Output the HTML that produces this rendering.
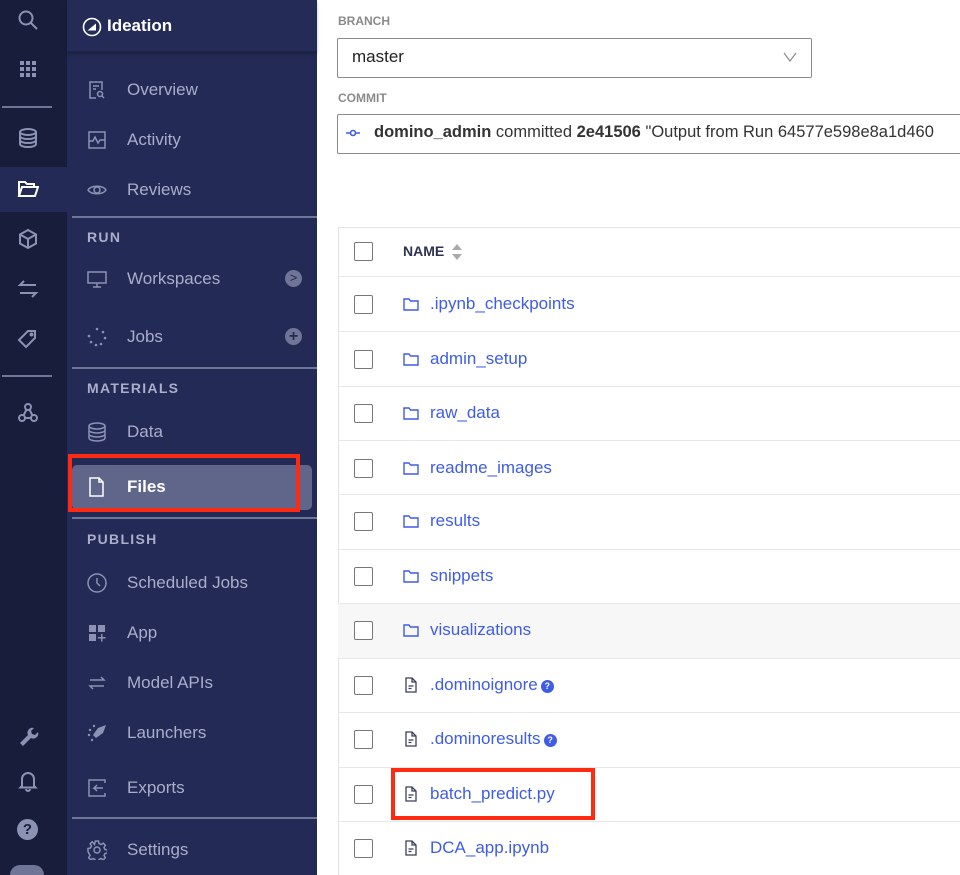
<!DOCTYPE html>
<html style="width:960px;height:875px;overflow:hidden"><head><meta charset="utf-8"><style>
*{margin:0;padding:0;box-sizing:border-box}
body{width:960px;height:875px;overflow:hidden;background:#fff;font-family:"Liberation Sans",Arial,sans-serif;position:relative}
.rail{position:absolute;left:0;top:0;width:67px;height:875px;background:#181d3b}
.side{position:absolute;left:67px;top:0;width:250px;height:875px;background:#232a55}
.hdr{position:absolute;left:67px;top:0;width:250px;height:52px;background:#242b57;border-bottom:1px solid #1d2349;box-shadow:0 2px 3px rgba(0,0,0,.25)}
.a{position:absolute}
.ri{position:absolute;left:17px;width:22px;height:22px}
.item{position:absolute;left:127px;font-size:17px;color:#a9aecb}
.ic{position:absolute;left:87px;width:20px;height:20px}
.sec{position:absolute;left:87px;font-size:14px;font-weight:bold;letter-spacing:1.3px;color:#a9aecb}
.div{position:absolute;left:72px;width:245px;height:2px;background:#6f7597}
.lbl{position:absolute;left:338px;font-size:12px;font-weight:bold;color:#8a8a8a}
.row{position:absolute;left:338px;width:622px;border-top:1px solid #e8e8e8}
.cb{position:absolute;left:16px;width:19px;height:19px;border:1px solid #777;border-radius:2px;background:#fff}
.nm{position:absolute;left:92px;font-size:17px;color:#3e5ce6}
.fi{position:absolute;left:65px;width:16px;height:16px}
.q{display:inline-block;width:13px;height:13px;border-radius:50%;background:#3e5ce6;color:#fff;font-size:9px;font-weight:bold;text-align:center;line-height:13px;vertical-align:1px;margin-left:3px}
</style></head><body>
<div class="rail"></div>
<div class="a" style="left:0;top:167px;width:67px;height:45px;background:#232a56"></div>
<div class="a" style="left:2px;top:106px;width:50px;height:2px;background:#6f7597"></div>
<div class="a" style="left:2px;top:375px;width:50px;height:2px;background:#6f7597"></div>
<svg class="ri" style="top:9px" viewBox="0 0 22 22" fill="none" stroke="#8c92b3" stroke-width="2"><circle cx="9" cy="9" r="6.5"/><path d="M14 14l6 6"/></svg>
<svg class="ri" style="top:58px" viewBox="0 0 22 22" fill="#8c92b3"><rect x="3" y="3" width="4" height="4"/><rect x="9" y="3" width="4" height="4"/><rect x="15" y="3" width="4" height="4"/><rect x="3" y="9" width="4" height="4"/><rect x="9" y="9" width="4" height="4"/><rect x="15" y="9" width="4" height="4"/><rect x="3" y="15" width="4" height="4"/><rect x="9" y="15" width="4" height="4"/><rect x="15" y="15" width="4" height="4"/></svg>
<svg class="ri" style="top:127px" viewBox="0 0 22 22" fill="none" stroke="#8c92b3" stroke-width="2"><ellipse cx="11" cy="5" rx="8" ry="3"/><path d="M3 5v12c0 1.7 3.6 3 8 3s8-1.3 8-3V5M3 9c0 1.7 3.6 3 8 3s8-1.3 8-3M3 13c0 1.7 3.6 3 8 3s8-1.3 8-3"/></svg>
<svg class="ri" style="top:178px" viewBox="0 0 22 22" fill="none" stroke="#fff" stroke-width="2"><path d="M2 18V4h6l2 2h7v3M2 18l3-9h16l-3 9z"/></svg>
<svg class="ri" style="top:228px" viewBox="0 0 22 22" fill="none" stroke="#8c92b3" stroke-width="2"><path d="M11 2l8 4.5v9L11 20l-8-4.5v-9zM3 6.5l8 4.5 8-4.5M11 11v9"/></svg>
<svg class="ri" style="top:278px" viewBox="0 0 22 22" fill="none" stroke="#8c92b3" stroke-width="2"><path d="M19 7H3l4-4M3 15h16l-4 4"/></svg>
<svg class="ri" style="top:328px" viewBox="0 0 22 22" fill="none" stroke="#8c92b3" stroke-width="2"><path d="M11 3h7v7l-9 9-7-7z"/><circle cx="14.5" cy="6.5" r="1"/></svg>
<svg class="ri" style="top:402px" viewBox="0 0 22 22" fill="none" stroke="#8c92b3" stroke-width="2"><circle cx="11" cy="5" r="3"/><circle cx="5" cy="16" r="3"/><circle cx="17" cy="16" r="3"/><path d="M9.5 7.5l-3 6M12.5 7.5l3 6M8 16h6"/></svg>
<svg class="ri" style="top:724px" viewBox="0 0 22 22" fill="#8c92b3"><path d="M3 19l8-8a5 5 0 0 1 6-7l-3 3 1 3 3 1 3-3a5 5 0 0 1-7 6l-8 8z"/></svg>
<svg class="ri" style="top:770px" viewBox="0 0 22 22" fill="none" stroke="#8c92b3" stroke-width="2"><path d="M5 16V9a6 6 0 0 1 12 0v7l1.5 1.5h-15zM9 19a2 2 0 0 0 4 0M11 2v1"/></svg>
<div class="a" style="left:17px;top:819px;width:21px;height:21px;border-radius:50%;background:#8c92b3;color:#181d3b;font-weight:bold;font-size:15px;text-align:center;line-height:21px">?</div>
<div class="a" style="left:10px;top:865px;width:34px;height:10px;border-radius:17px 17px 0 0;background:#6f7597"></div>

<div class="side"></div>
<div class="hdr"></div>
<svg class="a" style="left:82px;top:17px;width:20px;height:20px" viewBox="0 0 20 20"><circle cx="10" cy="10" r="8.5" fill="none" stroke="#fff" stroke-width="1.6"/><path d="M5.5 13.5h8.5V6.5z" fill="#fff"/></svg>
<div class="a" style="left:107px;top:16px;font-size:17px;font-weight:bold;color:#fff">Ideation</div>

<svg class="ic" style="top:80px" viewBox="0 0 20 20" fill="none" stroke="#8c92b3" stroke-width="1.5"><path d="M9 18H3V2h12v8M6 6h6M6 9h3"/><circle cx="13" cy="14" r="2.5"/><path d="M15 16l2 2"/></svg>
<div class="item" style="top:80px">Overview</div>
<svg class="ic" style="top:130px" viewBox="0 0 20 20" fill="none" stroke="#8c92b3" stroke-width="1.5"><rect x="2" y="2" width="16" height="16"/><path d="M2 11h4l2-4 3 6 2-3h5"/></svg>
<div class="item" style="top:130px">Activity</div>
<svg class="ic" style="top:180px" viewBox="0 0 20 20" fill="none" stroke="#8c92b3" stroke-width="1.5"><path d="M1 10c3-5 15-5 18 0-3 5-15 5-18 0z"/><circle cx="10" cy="10" r="3"/></svg>
<div class="item" style="top:180px">Reviews</div>
<div class="div" style="top:216px"></div>
<div class="sec" style="top:229px">RUN</div>
<svg class="ic" style="top:269px" viewBox="0 0 20 20" fill="none" stroke="#8c92b3" stroke-width="1.5"><rect x="1" y="3" width="18" height="11"/><path d="M10 14v4M6 18h8"/></svg>
<div class="item" style="top:269px">Workspaces</div>
<div class="a" style="left:285px;top:270px;width:17px;height:17px;border-radius:50%;background:#6f7597;color:#232a55;font-size:13px;text-align:center;line-height:16px">&gt;</div>
<svg class="ic" style="top:327px" viewBox="0 0 20 20" fill="#8c92b3"><circle cx="10" cy="2" r="1.3"/><circle cx="16" cy="5" r="1.3"/><circle cx="18" cy="11" r="1.3"/><circle cx="14" cy="17" r="1.3"/><circle cx="9" cy="18" r="1.3"/><circle cx="4" cy="15" r="1.3"/><circle cx="2" cy="9" r="1.3"/></svg>
<div class="item" style="top:327px">Jobs</div>
<div class="a" style="left:285px;top:328px;width:17px;height:17px;border-radius:50%;background:#6f7597;color:#232a55;font-size:16px;font-weight:bold;text-align:center;line-height:17px">+</div>
<div class="div" style="top:367px"></div>
<div class="sec" style="top:380px">MATERIALS</div>
<svg class="ic" style="top:422px" viewBox="0 0 20 20" fill="none" stroke="#8c92b3" stroke-width="1.5"><ellipse cx="10" cy="4" rx="8" ry="3"/><path d="M2 4v12c0 1.7 3.6 3 8 3s8-1.3 8-3V4M2 8c0 1.7 3.6 3 8 3s8-1.3 8-3M2 12c0 1.7 3.6 3 8 3s8-1.3 8-3"/></svg>
<div class="item" style="top:422px">Data</div>
<div class="a" style="left:72px;top:465px;width:240px;height:45px;border-radius:5px;background:#5f6689"></div>
<svg class="ic" style="top:477px" viewBox="0 0 20 20" fill="none" stroke="#fff" stroke-width="1.5"><path d="M3 1h9l4 4v14H3zM12 1v4h4"/></svg>
<div class="item" style="top:477px;color:#fff;font-weight:bold">Files</div>
<div class="a" style="left:68px;top:454px;width:232px;height:58px;border:4px solid #ff2a12"></div>
<div class="div" style="top:517px"></div>
<div class="sec" style="top:531px">PUBLISH</div>
<svg class="ic" style="top:573px" viewBox="0 0 20 20" fill="none" stroke="#8c92b3" stroke-width="1.5"><circle cx="10" cy="10" r="9"/><path d="M10 5v5l3 3"/></svg>
<div class="item" style="top:573px">Scheduled Jobs</div>
<svg class="ic" style="top:623px" viewBox="0 0 20 20" fill="#8c92b3"><rect x="2" y="2" width="7" height="7"/><rect x="11" y="2" width="7" height="7"/><rect x="2" y="11" width="7" height="7"/><path d="M14 11h1.5v3h3v1.5h-3v3H14v-3h-3V14h3z"/></svg>
<div class="item" style="top:623px">App</div>
<svg class="ic" style="top:673px" viewBox="0 0 20 20" fill="none" stroke="#8c92b3" stroke-width="1.5"><path d="M3 7h14l-3-3M17 13H3l3 3"/></svg>
<div class="item" style="top:673px">Model APIs</div>
<svg class="ic" style="top:723px" viewBox="0 0 20 20" fill="#8c92b3"><path d="M19 2l-8 3-5 7 3 3 7-5z"/><circle cx="3" cy="7" r="1.2"/><circle cx="7" cy="3" r="1.2"/><circle cx="2" cy="12" r="1.2"/><circle cx="5" cy="17" r="1.2"/></svg>
<div class="item" style="top:723px">Launchers</div>
<svg class="ic" style="top:778px" viewBox="0 0 20 20" fill="none" stroke="#8c92b3" stroke-width="1.5"><path d="M18 5V2H2v16h16v-3M16 10H7l3-3M7 10l3 3"/></svg>
<div class="item" style="top:778px">Exports</div>
<div class="div" style="top:817px"></div>
<svg class="ic" style="top:840px" viewBox="0 0 20 20" fill="none" stroke="#8c92b3" stroke-width="1.5"><circle cx="10" cy="10" r="3"/><path d="M8.5 1h3l.5 2.5 2 1 2.3-1.3 2 2-1.3 2.3 1 2 2.5.5v3l-2.5.5-1 2 1.3 2.3-2 2-2.3-1.3-2 1-.5 2.5h-3l-.5-2.5-2-1-2.3 1.3-2-2 1.3-2.3-1-2L1 11.5v-3l2.5-.5 1-2-1.3-2.3 2-2L7.5 4.5l.5-2z"/></svg>
<div class="item" style="top:840px">Settings</div>

<div class="lbl" style="top:14px">BRANCH</div>
<div class="a" style="left:337px;top:38px;width:475px;height:40px;border:1px solid #8a8a8a;border-radius:2px"></div>
<div class="a" style="left:352px;top:47px;font-size:17px;color:#222">master</div>
<svg class="a" style="left:783px;top:51px;width:14px;height:12px" viewBox="0 0 14 12" fill="none" stroke="#888" stroke-width="1.2"><path d="M1 2l6 8 6-8"/></svg>
<div class="lbl" style="top:91px">COMMIT</div>
<div class="a" style="left:337px;top:114px;width:640px;height:40px;border:1px solid #8a8a8a;border-radius:2px"></div>
<svg class="a" style="left:346px;top:128px;width:14px;height:10px" viewBox="0 0 14 10" fill="none" stroke="#3e5ce6" stroke-width="1.6"><circle cx="7" cy="5" r="2.5"/><path d="M0 5h4M10 5h4"/></svg>
<div class="a" style="left:374px;top:123px;font-size:16.5px;color:#333;white-space:nowrap"><b>domino_admin</b> committed <b>2e41506</b> "Output from Run 64577e598e8a1d460</div>

<div class="a" style="left:338px;top:227px;width:622px;height:648px;border-left:1px solid #e3e3e3;border-top:1px solid #e3e3e3"></div>
<div class="row" style="top:227px;height:49px;border-top:none"><div class="cb" style="top:15px"></div><div class="a" style="left:65px;top:16px;font-size:14px;font-weight:bold;color:#2d3250">NAME</div>
<svg class="a" style="left:113px;top:16px;width:12px;height:18px" viewBox="0 0 12 18" fill="#aaa"><path d="M6 1l5 6H1zM6 17l5-6H1z"/></svg></div>

<div class="row" style="top:276px;height:55px"><div class="cb" style="top:18px"></div><svg class="fi" style="top:19px" viewBox="0 0 16 16" fill="none" stroke="#3e5ce6" stroke-width="1.4"><path d="M1 3h5l1.5 2H15v9H1z"/></svg><div class="nm" style="top:17px">.ipynb_checkpoints</div></div>
<div class="row" style="top:331px;height:55px"><div class="cb" style="top:18px"></div><svg class="fi" style="top:19px" viewBox="0 0 16 16" fill="none" stroke="#3e5ce6" stroke-width="1.4"><path d="M1 3h5l1.5 2H15v9H1z"/></svg><div class="nm" style="top:17px">admin_setup</div></div>
<div class="row" style="top:386px;height:54px"><div class="cb" style="top:17px"></div><svg class="fi" style="top:18px" viewBox="0 0 16 16" fill="none" stroke="#3e5ce6" stroke-width="1.4"><path d="M1 3h5l1.5 2H15v9H1z"/></svg><div class="nm" style="top:16px">raw_data</div></div>
<div class="row" style="top:440px;height:54px"><div class="cb" style="top:18px"></div><svg class="fi" style="top:19px" viewBox="0 0 16 16" fill="none" stroke="#3e5ce6" stroke-width="1.4"><path d="M1 3h5l1.5 2H15v9H1z"/></svg><div class="nm" style="top:17px">readme_images</div></div>
<div class="row" style="top:494px;height:55px"><div class="cb" style="top:17px"></div><svg class="fi" style="top:18px" viewBox="0 0 16 16" fill="none" stroke="#3e5ce6" stroke-width="1.4"><path d="M1 3h5l1.5 2H15v9H1z"/></svg><div class="nm" style="top:16px">results</div></div>
<div class="row" style="top:549px;height:54px"><div class="cb" style="top:17px"></div><svg class="fi" style="top:18px" viewBox="0 0 16 16" fill="none" stroke="#3e5ce6" stroke-width="1.4"><path d="M1 3h5l1.5 2H15v9H1z"/></svg><div class="nm" style="top:16px">snippets</div></div>
<div class="row" style="top:603px;height:55px;background:#f7f7f7"><div class="cb" style="top:17px"></div><svg class="fi" style="top:18px" viewBox="0 0 16 16" fill="none" stroke="#3e5ce6" stroke-width="1.4"><path d="M1 3h5l1.5 2H15v9H1z"/></svg><div class="nm" style="top:16px">visualizations</div></div>
<div class="row" style="top:658px;height:54px"><div class="cb" style="top:17px"></div><svg class="fi" style="top:18px" viewBox="0 0 16 16" fill="none" stroke="#3a3f5a" stroke-width="1.3"><path d="M3 1h6l4 4v10H3zM9 1v4h4M5.5 9h5M5.5 11.5h3"/></svg><div class="nm" style="top:16px">.dominoignore<span class="q">?</span></div></div>
<div class="row" style="top:712px;height:55px"><div class="cb" style="top:17px"></div><svg class="fi" style="top:18px" viewBox="0 0 16 16" fill="none" stroke="#3a3f5a" stroke-width="1.3"><path d="M3 1h6l4 4v10H3zM9 1v4h4M5.5 9h5M5.5 11.5h3"/></svg><div class="nm" style="top:16px">.dominoresults<span class="q">?</span></div></div>
<div class="row" style="top:767px;height:54px"><div class="cb" style="top:17px"></div><svg class="fi" style="top:18px" viewBox="0 0 16 16" fill="none" stroke="#3a3f5a" stroke-width="1.3"><path d="M3 1h6l4 4v10H3zM9 1v4h4M5.5 9h5M5.5 11.5h3"/></svg><div class="nm" style="top:16px">batch_predict.py</div></div>
<div class="a" style="left:391px;top:768px;width:204px;height:52px;border:4px solid #ff2a12"></div>
<div class="row" style="top:821px;height:54px"><div class="cb" style="top:17px"></div><svg class="fi" style="top:18px" viewBox="0 0 16 16" fill="none" stroke="#3a3f5a" stroke-width="1.3"><path d="M3 1h6l4 4v10H3zM9 1v4h4M5.5 9h5M5.5 11.5h3"/></svg><div class="nm" style="top:16px">DCA_app.ipynb</div></div>
</body></html>
